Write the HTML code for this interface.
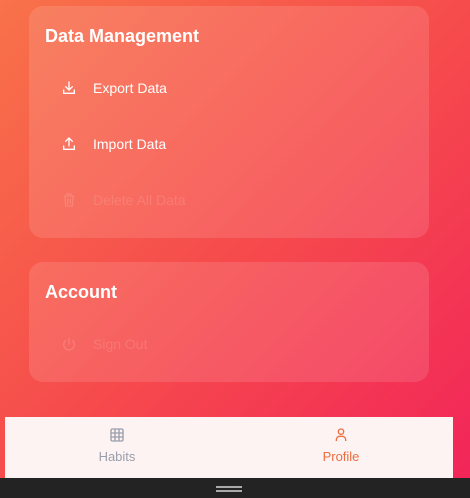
<!DOCTYPE html><html><head><style>
body{margin:0;width:470px;height:498px;overflow:hidden;font-family:"Liberation Sans",sans-serif;background:linear-gradient(135deg,#f8724a 0%,#f64b4c 50%,#f2245a 100%);position:relative}
.card{position:absolute;left:29px;width:400px;background:rgba(255,255,255,0.12);border-radius:14px}
h2{margin:0;position:absolute;left:16px;font-size:18px;font-weight:bold;color:#fff}
.row{position:absolute;left:32px;display:flex;align-items:center;color:#fff;font-size:14px}
.row svg{width:16px;height:16px;margin-right:16px}
.dim{color:rgba(255,255,255,0.13)}
.nav{position:absolute;left:5px;top:417px;width:448px;height:61px;background:#fdf3f3}
.tab{position:absolute;top:0;width:224px;text-align:center;font-size:13px}
.tab svg{display:block;margin:10px auto 6px;width:16px;height:16px}
.bar{position:absolute;left:0;top:478px;width:470px;height:20px;background:#232323}
</style></head><body>
<div class="card" style="top:6px;height:232px">
<h2 style="top:20px">Data Management</h2>
<div class="row" style="top:74px"><svg viewBox="0 0 24 24" fill="none" stroke="#fff" stroke-width="2" stroke-linecap="round"><path d="M12 3v12M7 10l5 5 5-5M4 15v5h16v-5"/></svg>Export Data</div>
<div class="row" style="top:130px"><svg viewBox="0 0 24 24" fill="none" stroke="#fff" stroke-width="2" stroke-linecap="round"><path d="M12 15V3M7 8l5-5 5 5M4 15v5h16v-5"/></svg>Import Data</div>
<div class="row dim" style="top:186px"><svg viewBox="0 0 24 24" fill="none" stroke="rgba(255,255,255,0.15)" stroke-width="2"><path d="M4 6h16M9 6V3h6v3M6 6l1 15h10l1-15M10 10v8M14 10v8"/></svg>Delete All Data</div>
</div>
<div class="card" style="top:262px;height:120px">
<h2 style="top:20px">Account</h2>
<div class="row dim" style="top:74px"><svg viewBox="0 0 24 24" fill="none" stroke="rgba(255,255,255,0.15)" stroke-width="2" stroke-linecap="round"><path d="M12 3v9M6.5 7a8 8 0 1 0 11 0"/></svg>Sign Out</div>
</div>
<div class="nav">
<div class="tab" style="left:0;color:#9a9eab"><svg viewBox="0 0 24 24" fill="none" stroke="#9a9eab" stroke-width="2"><rect x="3" y="3" width="18" height="18" rx="2"/><path d="M3 9h18M3 15h18M9 3v18M15 3v18"/></svg>Habits</div>
<div class="tab" style="left:224px;color:#ef6c3f"><svg viewBox="0 0 24 24" fill="none" stroke="#ef6c3f" stroke-width="2"><circle cx="12" cy="7" r="4"/><path d="M5 21v-2a5 5 0 0 1 5-5h4a5 5 0 0 1 5 5v2"/></svg>Profile</div>
</div>
<div class="bar"><div style="position:absolute;left:216px;top:8px;width:26px;height:1.5px;background:#aaa"></div><div style="position:absolute;left:216px;top:12px;width:26px;height:1.5px;background:#aaa"></div></div>
</body></html>
